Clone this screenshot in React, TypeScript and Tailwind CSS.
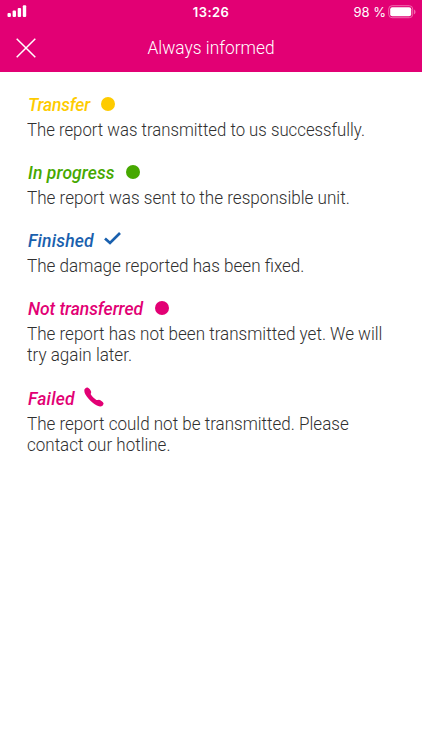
import React from 'react';

type ItemProps = {
  title: string;
  titleClass: string;
  className: string;
  icon: React.ReactNode;
  lines: { text: string; className: string }[];
};

function Item({ title, titleClass, className, icon, lines }: ItemProps) {
  return (
    <section className={className}>
      <h2 className="flex h-[24px] items-center pl-px">
        <span className={`whitespace-nowrap text-[17.5px] leading-[24px] font-medium italic ${titleClass}`}>{title}</span>
        {icon}
      </h2>
      <p className="mt-[2px] text-[18px] font-light leading-[21px] text-[#303030]">
        {lines.map((l) => (
          <span key={l.text} className={`block origin-left whitespace-nowrap ${l.className}`}>{l.text}</span>
        ))}
      </p>
    </section>
  );
}

export default function App() {
  return (
    <div className="h-[750px] w-[422px] overflow-hidden bg-white font-['Roboto',sans-serif]">
      <header className="h-[72px] bg-[#e20074] text-white">
        <div className="grid h-6 grid-cols-3 items-center font-['Inter',sans-serif]">
          <svg className="ml-[7px]" width="20" height="24" viewBox="0 0 20 24" fill="white">
            <rect x="0.5" y="13" width="3.4" height="4" rx="1" />
            <rect x="5.6" y="10.5" width="3.4" height="6.5" rx="1" />
            <rect x="10.7" y="8" width="3.4" height="9" rx="1" />
            <rect x="15.8" y="5.3" width="3.4" height="11.7" rx="1" />
          </svg>
          <span className="pt-px text-center text-[13px] font-semibold tracking-[0.4px]">13:26</span>
          <div className="flex items-center justify-end pr-[6px]">
            <span className="pt-px text-[13px]">98 %</span>
            <svg className="ml-[2px]" width="28" height="24" viewBox="0 0 28 24" fill="none">
              <rect x="0.7" y="5.7" width="24" height="12" rx="3.4" stroke="#f06aad" />
              <rect x="2.2" y="7.2" width="21" height="9" rx="2" fill="white" />
              <path d="M26 9.5c2 .8 2 4 0 4.800z" fill="#f06aad" />
            </svg>
          </div>
        </div>
        <div className="grid h-12 grid-cols-[60px_1fr_60px] items-center">
          <svg className="-mt-px ml-4" width="20" height="20" viewBox="0 0 20 20" stroke="white" strokeWidth="1.5">
            <path d="M0.7 0.7L19.300 19.300M19.300 0.700L0.700 19.300" />
          </svg>
          <h1 className="-mt-px scale-x-[0.965] text-center text-[18px] font-light">Always informed</h1>
        </div>
      </header>
      <main className="px-[27px] pt-[21px]">
        <Item className="h-[68px]" title="Transfer" titleClass="text-[#fecb00] tracking-[-0.2px]"
          icon={<span className="mb-[2px] ml-[11px] size-[14px] rounded-full bg-[#fecb00]" />}
          lines={[{ text: 'The report was transmitted to us successfully.', className: 'scale-x-[0.931]' }]} />
        <Item className="h-[68px]" title="In progress" titleClass="text-[#46a800] tracking-[0.1px]"
          icon={<span className="mb-[2px] ml-[11px] size-[14px] rounded-full bg-[#46a800]" />}
          lines={[{ text: 'The report was sent to the responsible unit.', className: 'scale-x-[0.949]' }]} />
        <Item className="h-[68px]" title="Finished" titleClass="text-[#1960ae] tracking-[0.2px]"
          icon={<svg className="ml-[10px] mb-[5px]" width="17" height="13" viewBox="0 0 17 13" fill="none" stroke="#1960ae" strokeWidth="2.700"><path d="M1 6.500L6 11L16 1" /></svg>}
          lines={[{ text: 'The damage reported has been fixed.', className: 'scale-x-[0.949]' }]} />
        <Item className="h-[90px]" title="Not transferred" titleClass="text-[#e20074] tracking-[-0.05px]"
          icon={<span className="mb-[2px] ml-[12px] size-[14px] rounded-full bg-[#e20074]" />}
          lines={[{ text: 'The report has not been transmitted yet. We will', className: 'scale-x-[0.947]' }, { text: 'try again later.', className: 'scale-x-[0.949]' }]} />
        <Item className="" title="Failed" titleClass="text-[#e20074] tracking-[0.2px]"
          icon={<svg className="ml-[9px] mb-[5px]" width="20" height="20" viewBox="0 0 20 20" fill="#e20074"><path d="M0.300 3.500C0.300 1.700 2 0.300 3.600 0.500C5 1 7 3.400 7.200 5C7.200 6 6.500 6.600 6.900 7.600C8 9.700 10.400 11.800 12.400 13C13.400 13.400 14 12.600 15 12.700C16.700 13 19.200 15 19.600 16.400C19.500 18 17.800 19.700 16 19.500C13.500 19.200 11.300 17.800 9 16C5.800 13.400 3 10.200 1.300 7.200C0.700 6 0.300 4.800 0.300 3.500Z" /></svg>}
          lines={[{ text: 'The report could not be transmitted. Please', className: 'scale-x-[0.946]' }, { text: 'contact our hotline.', className: 'scale-x-[0.944]' }]} />
      </main>
    </div>
  );
}
